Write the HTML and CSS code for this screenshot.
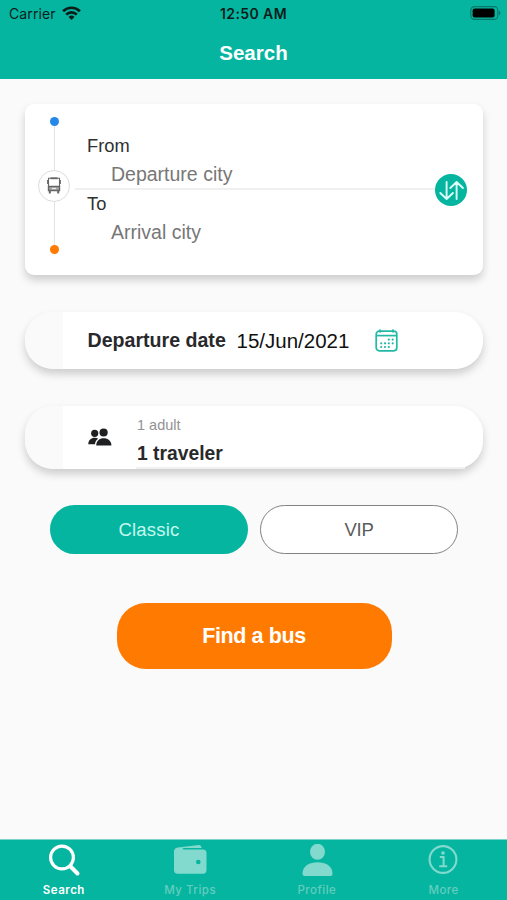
FILE: index.html
```html
<!DOCTYPE html>
<html lang="en">
<head>
<meta charset="utf-8">
<title>Search</title>
<link rel="stylesheet" href="styles.css">
</head>
<body>
<div class="app">
  <header class="header">
    <div class="status">
      <div class="carrier"><span>Carrier</span>
        <svg width="19" height="14" viewBox="0 0 19 14"><g fill="none" stroke="#0b1d1b" stroke-width="2.7"><path d="M1.1 5.2a12 12 0 0 1 16.8 0"/><path d="M4.2 8.6a7.6 7.6 0 0 1 10.6 0"/></g><path d="M6.500 11a4.400 4.400 0 0 1 6 0l-3 3z" fill="#0b1d1b"/></svg>
      </div>
      <div class="clock">12:50 AM</div>
      <div class="battery"><svg width="31" height="14" viewBox="0 0 31 14"><rect x=".8" y=".7" width="27" height="12.6" rx="3.6" fill="none" stroke="#06796b" stroke-width="1.2"/><rect x="2.6" y="2.500" width="22" height="9" rx="2" fill="#000"/><path d="M29 4.8c2 .8 2 3.6 0 4.4z" fill="#06796b"/></svg></div>
    </div>
    <h1 class="title">Search</h1>
  </header>
  <main class="main">
    <section class="card route">
      <div class="track">
        <i class="dot blue"></i><i class="line"></i>
        <div class="bus"><svg width="14" height="17" viewBox="0 0 14 17" fill="none" stroke="#666"><path d="M1.500 10V1.200h11V10" stroke-width="1.100"/><path d="M3.500 1.300h7" stroke-width="1.800"/><path d="M1.500 9.500h11v4h-11z" fill="#aaa" stroke-width="1.400"/><path d="M.6 3v4M13.400 3v4" stroke-width="1"/><path d="M5 11.500h4" stroke="#eee" stroke-width="1.200"/><path d="M2.800 13.500V16.500M11.200 13.500V16.500" stroke-width="2"/></svg></div>
        <i class="line"></i><i class="dot orange"></i>
      </div>
      <div class="fields">
        <div class="field"><div class="label">From</div><div class="value">Departure city</div></div>
        <div class="field to"><div class="label">To</div><div class="value">Arrival city</div></div>
      </div>
      <div class="swap"><svg width="32" height="32" viewBox="0 0 32 32" fill="none" stroke="#dcfff9" stroke-width="1.900" stroke-linecap="round" stroke-linejoin="round"><path d="M11.600 8v17M5.300 19l6.300 6 6.300-6M21.600 25V8M15.300 14l6.300-6 6.300 6"/></svg></div>
    </section>
    <section class="card pill date">
      <strong class="date-label">Departure date</strong>
      <span class="date-value">15/Jun/2021</span>
      <svg class="calendar" width="23" height="23" viewBox="0 0 23 23"><g fill="none" stroke="#24b9a7" stroke-width="1.700"><rect x="1.200" y="2.200" width="20.600" height="19.600" rx="3"/><path d="M1.200 6.600h20.600"/><path d="M5 .6v3M18 .6v3" stroke-width="2"/></g><path d="M13.800 10.600h.01M17.700 10.600h.01M6.200 14.300h.01M10 14.300h.01M13.800 14.300h.01M17.700 14.300h.01M6.200 18h.01M10 18h.01M13.800 18h.01" stroke="#24b9a7" stroke-width="2.200" stroke-linecap="round"/></svg>
    </section>
    <section class="card pill travelers">
      <svg class="people" width="24" height="18" viewBox="0 0 24 18" fill="#1f2022"><circle cx="6.700" cy="5.300" r="3.600"/><path d="M.3 16.200c0-4 2.900-6.400 6.400-6.400 1.400 0 2.500.3 3.500 1-1.900 1.300-3 3-3.200 5.400z"/><circle cx="15.600" cy="4.500" r="4.100"/><path d="M8.200 17.500c0-4.600 3.200-7.200 7.500-7.200s7.700 2.600 7.700 7.200z"/></svg>
      <div class="traveler-info"><span class="adult">1 adult</span><strong class="count">1 traveler</strong></div>
    </section>
    <div class="classes"><button class="choice active">Classic</button><button class="choice">VIP</button></div>
    <button class="find">Find a bus</button>
  </main>
  <nav class="tabs">
    <div class="tab current"><svg width="34" height="34" viewBox="0 0 34 34" fill="none" stroke="#fff" stroke-linecap="round"><circle cx="15" cy="13.500" r="11.400" stroke-width="3.200"/><path d="M23.500 22.500l7 7" stroke-width="4"/></svg><span>Search</span></div>
    <div class="tab"><svg width="34" height="34" viewBox="0 0 34 34"><path d="M1 7.500Q1 4 5 3.500L26 1q2-.2 2.700 3H11q-1.400 0-1.400.8t1.400.8h19q3.500 0 3.500 3.500v17q0 3.600-3.600 3.600H4.600Q1 29.700 1 26z" fill="#82dacf"/><circle cx="25.300" cy="18" r="2.300" fill="#06b59f"/></svg><span>My Trips</span></div>
    <div class="tab"><svg width="34" height="34" viewBox="0 0 34 34" fill="#82dacf"><ellipse cx="17.500" cy="7.800" rx="7.500" ry="8"/><path d="M2.500 29.500c0-7.500 7-11.300 15-11.300s15 3.800 15 11.300q0 2.500-2.500 2.500H5Q2.500 32 2.500 29.500z"/></svg><span>Profile</span></div>
    <div class="tab"><svg width="34" height="34" viewBox="0 0 34 34" fill="none" stroke="#82dacf"><circle cx="16" cy="15.500" r="13.400" stroke-width="2.100"/><path d="M12.800 13.100h3.800v9M12.200 22.300h8" stroke-width="2"/><circle cx="16" cy="9" r="1.800" fill="#82dacf" stroke="none"/></svg><span>More</span></div>
  </nav>
</div>
</body>
</html>
```
FILE: styles.css
```css
* { box-sizing: border-box; }
body { margin: 0; font-family: "Liberation Sans", Arial, sans-serif; }
button { font-family: inherit; padding: 0; }
svg { display: block; flex: none; }
.app { width: 507px; height: 900px; display: flex; flex-direction: column; background: #fafafa; overflow: hidden; white-space: nowrap; }
.header { height: 79px; background: #06b59f; flex: none; }
.status { height: 28px; display: grid; grid-template-columns: 1fr auto 1fr; align-items: center; padding: 0 6px 0 9px; font: 14px/28px Inter, sans-serif; color: #0b1d1b; }
.carrier { display: flex; gap: 6px; align-items: center; letter-spacing: .1px; }
.carrier svg { margin-top: -3px; }
.clock { font-weight: 600; font-size: 14px; letter-spacing: .4px; margin-left: -3px; }
.battery { justify-self: end; margin-top: -2px; }
.title { margin: 12px 0 0; text-align: center; font-size: 20.500px; line-height: 26px; color: #fff; }
.main { flex: 1; padding: 25px 24.500px 0 25px; }
.card { background: #fff; box-shadow: 0 5px 8px rgba(0,0,0,.18); }
.route { height: 170.500px; border-radius: 9px; display: flex; align-items: flex-start; }
.track { width: 32px; margin: 13px 0 0 13px; display: flex; flex-direction: column; align-items: center; }
.dot { width: 9px; height: 9px; border-radius: 50%; }
.blue { background: #2588e8; }
.orange { background: #ff7a00; }
.line { width: 1px; height: 43.500px; background: #e3e3e3; }
.bus { width: 32px; height: 32px; border: 1px solid #ddd; border-radius: 50%; display: grid; place-items: center; }
.fields { flex: 1; margin: 30px 0 0 5px; }
.field { height: 56px; padding-left: 12px; border-bottom: 2px solid #f0f0f0; }
.field.to { border-bottom: 0; }
.label { font-size: 18.300px; line-height: 22px; color: #303030; padding-top: 1px; }
.to .label { padding-top: 3px; }
.value { margin-left: 24px; font-size: 19.500px; line-height: 22px; color: #777; padding-top: 6px; }
.swap { width: 32px; height: 32px; border-radius: 50%; background: #06b59f; margin: 70px 16px 0 0; }
.pill { border-radius: 28px; background: linear-gradient(90deg, #fafafa 38px, #fff 38px); }
.date { height: 57px; margin-top: 37.500px; padding-left: 62.500px; display: flex; align-items: center; color: #29292c; }
.date-label { width: 149px; font-size: 19.600px; }
.date-value { width: 138.500px; font-size: 20.500px; color: #111; padding-top: 1px; }
.travelers { height: 63px; margin-top: 36.500px; padding-left: 63px; display: flex; }
.people { margin-top: 22px; }
.traveler-info { flex: 1; margin-left: 24px; display: flex; flex-direction: column; border-bottom: 2px solid #f0f0f0; margin-right: 18px; }
.adult { font-size: 14.500px; color: #929292; line-height: 18px; margin-top: 10px; padding-left: 1px; }
.count { font-size: 19.300px; line-height: 22px; margin-top: 9px; padding-left: 1px; color: #29292c; }
.classes { display: flex; gap: 12px; margin: 36.500px 0 0 25px; }
.choice { width: 198px; height: 49px; border-radius: 25px; border: 1px solid #828282; background: #fff; color: #5c5c5c; font-size: 18.500px; letter-spacing: -.2px; }
.choice.active { background: #06b59f; border: 0; color: #c4f8ef; letter-spacing: .2px; }
.find { display: block; width: 275px; height: 66px; margin: 48.500px 0 0 91.500px; border: 0; border-radius: 29px; background: #ff7a00; color: #fff; font-size: 21.500px; letter-spacing: -.4px; font-weight: 700; padding-top: 1px; }
.tabs { height: 61px; flex: none; background: #06b59f; border-top: 1px solid #79d5ca; display: grid; grid-template-columns: repeat(4, 1fr); }
.tab { display: flex; flex-direction: column; align-items: center; padding-top: 4px; color: #63cdc0; font: 500 11.500px/14px Inter, sans-serif; letter-spacing: .5px; }
.tab span { margin-top: 5px; }
.current { color: #fff; font-weight: 600; padding-left: 1px; }
```
